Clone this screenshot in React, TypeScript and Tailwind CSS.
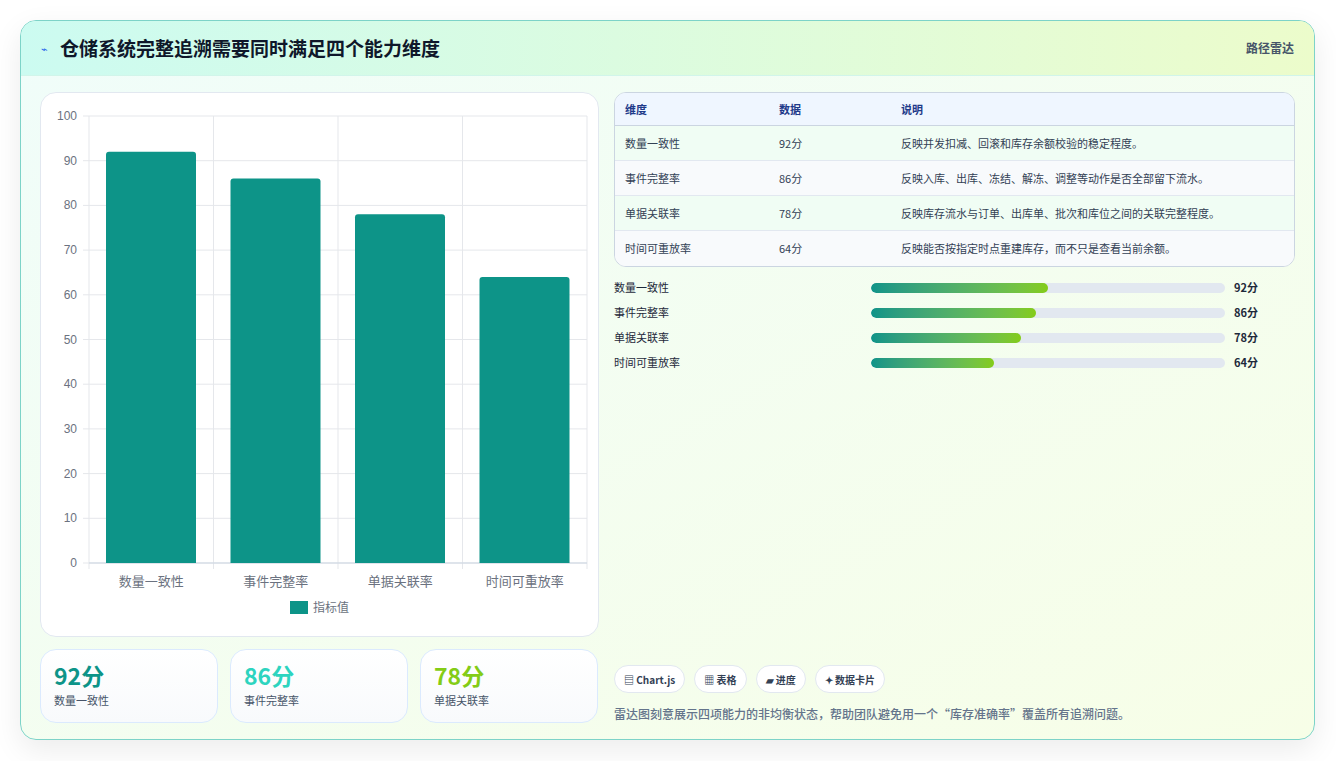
import React from "react";

const dims = [
  { n: "数量一致性", v: 92, d: "反映并发扣减、回滚和库存余额校验的稳定程度。" },
  { n: "事件完整率", v: 86, d: "反映入库、出库、冻结、解冻、调整等动作是否全部留下流水。" },
  { n: "单据关联率", v: 78, d: "反映库存流水与订单、出库单、批次和库位之间的关联完整程度。" },
  { n: "时间可重放率", v: 64, d: "反映能否按指定时点重建库存，而不只是查看当前余额。" },
];

function Chart() {
  const L = 48, R = 546, T = 23, B = 470;
  const h = B - T;
  const cw = (R - L) / 4;
  return (
    <svg width="558" height="544" className="block">
      {[0, 10, 20, 30, 40, 50, 60, 70, 80, 90, 100].map((t) => {
        const y = B - (t / 100) * h;
        return (
          <g key={t}>
            <line x1={L - 6} x2={R} y1={y} y2={y} stroke="#e5e7eb" />
            <text x={L - 12} y={y + 4} textAnchor="end" fontSize="12" fill="#6b7280" fontFamily="Liberation Sans, Arial">{t}</text>
          </g>
        );
      })}
      {[0, 1, 2, 3, 4].map((i) => (
        <line key={i} x1={L + i * cw} x2={L + i * cw} y1={T} y2={B + 6} stroke="#e5e7eb" />
      ))}
      <line x1={L} x2={R} y1={B} y2={B} stroke="#cbd5e1" />
      {dims.map((d, i) => {
        const x = L + i * cw + 17;
        const y = B - (d.v / 100) * h;
        return (
          <g key={d.n}>
            <path d={`M${x} ${B} V${y + 3} Q${x} ${y} ${x + 3} ${y} H${x + 87} Q${x + 90} ${y} ${x + 90} ${y + 3} V${B} Z`} fill="#0d9488" />
            <text x={L + i * cw + cw / 2} y={B + 23} textAnchor="middle" fontSize="13" fill="#6b7280" fontFamily="Noto Sans CJK SC, sans-serif">{d.n}</text>
          </g>
        );
      })}
      <rect x="249" y="508" width="18" height="13" fill="#0d9488" />
      <text x="272" y="519" fontSize="12" fill="#6b7280" fontFamily="Noto Sans CJK SC, sans-serif">指标值</text>
    </svg>
  );
}

export default function App() {
  return (
    <div className="w-[1336px] h-[761px] bg-white p-5" style={{ fontFamily: '"Noto Sans CJK SC", "Noto Sans", sans-serif' }}>
      <div className="h-[720px] w-[1295px] rounded-2xl border border-[#7dd3c8] overflow-hidden shadow-[0_10px_30px_rgba(0,0,0,0.08)] bg-gradient-to-br from-[#f0fdfa] to-[#f7fee7] flex flex-col">
        <div className="h-[55px] shrink-0 flex items-center justify-between px-5 bg-gradient-to-r from-[#ccfbf1] to-[#ecfccb] border-b border-[#d1f5ea]">
          <div className="flex items-center gap-3">
            <span className="text-[#2563eb] text-[11px]">⌁</span>
            <span className="text-[19px] font-bold text-[#0f172a]">仓储系统完整追溯需要同时满足四个能力维度</span>
          </div>
          <span className="text-[12px] text-[#475569] font-semibold">路径雷达</span>
        </div>
        <div className="flex-1 flex gap-[15px] px-[19px] pt-4 pb-[18px]">
          <div className="w-[559px] flex flex-col gap-3">
            <div className="h-[545px] bg-white rounded-2xl border border-[#e2e8f0]"><Chart /></div>
            <div className="flex gap-[12px]">
              {[
                { v: "92分", n: "数量一致性", c: "text-[#0d9488]" },
                { v: "86分", n: "事件完整率", c: "text-[#2dd4bf]" },
                { v: "78分", n: "单据关联率", c: "text-[#84cc16]" },
              ].map((s) => (
                <div key={s.n} className="w-[178px] h-[74px] rounded-2xl border border-[#dbeafe] bg-gradient-to-b from-white to-[#f8fafc] px-[13px] pt-[10px]">
                  <div className={`text-[23px] font-bold leading-[30px] ${s.c}`}>{s.v}</div>
                  <div className="text-[11px] text-[#475569] mt-[2px]">{s.n}</div>
                </div>
              ))}
            </div>
          </div>
          <div className="flex-1 flex flex-col">
            <div className="rounded-xl border border-[#cbd5e1] overflow-hidden bg-white text-[11px] text-[#334155]">
              <div className="flex h-[33px] items-center bg-[#eff6ff] border-b border-[#cbd5e1] text-[#1e3a8a] font-semibold">
                <div className="w-[164px] pl-[10px]">维度</div>
                <div className="w-[122px]">数据</div>
                <div>说明</div>
              </div>
              {dims.map((d, i) => (
                <div key={d.n} className={`flex h-[35px] items-center ${i < 3 ? "border-b border-[#e2e8f0]" : ""} ${i % 2 ? "bg-[#f8fafc]" : "bg-[#f0fdf4]"}`}>
                  <div className="w-[164px] pl-[10px]">{d.n}</div>
                  <div className="w-[122px]">{d.v}分</div>
                  <div>{d.d}</div>
                </div>
              ))}
            </div>
            <div className="mt-[12px] flex flex-col gap-[8px]">
              {dims.map((d) => (
                <div key={d.n} className="flex items-center h-[17px] text-[11px]">
                  <div className="w-[257px] text-[#1e293b]">{d.n}</div>
                  <div className="w-[354px] h-[10px] rounded-full bg-[#e2e8f0] overflow-hidden">
                    <div className="h-full rounded-full bg-gradient-to-r from-[#0d9488] to-[#84cc16]" style={{ width: `${(d.v / 100) * 192}px` }} />
                  </div>
                  <div className="ml-[9px] font-bold text-[#1e293b]">{d.v}分</div>
                </div>
              ))}
            </div>
            <div className="mt-auto flex gap-[9px]">
              {["▤ Chart.js", "▦ 表格", "▰ 进度", "✦ 数据卡片"].map((t) => (
                <span key={t} className="h-[28px] px-[9px] flex items-center rounded-full border border-[#e2e8f0] bg-white text-[10px] font-semibold text-[#334155]">{t}</span>
              ))}
            </div>
            <div className="mt-[12px] text-[12px] text-[#64748b] font-medium">雷达图刻意展示四项能力的非均衡状态，帮助团队避免用一个“库存准确率”覆盖所有追溯问题。</div>
          </div>
        </div>
      </div>
    </div>
  );
}
